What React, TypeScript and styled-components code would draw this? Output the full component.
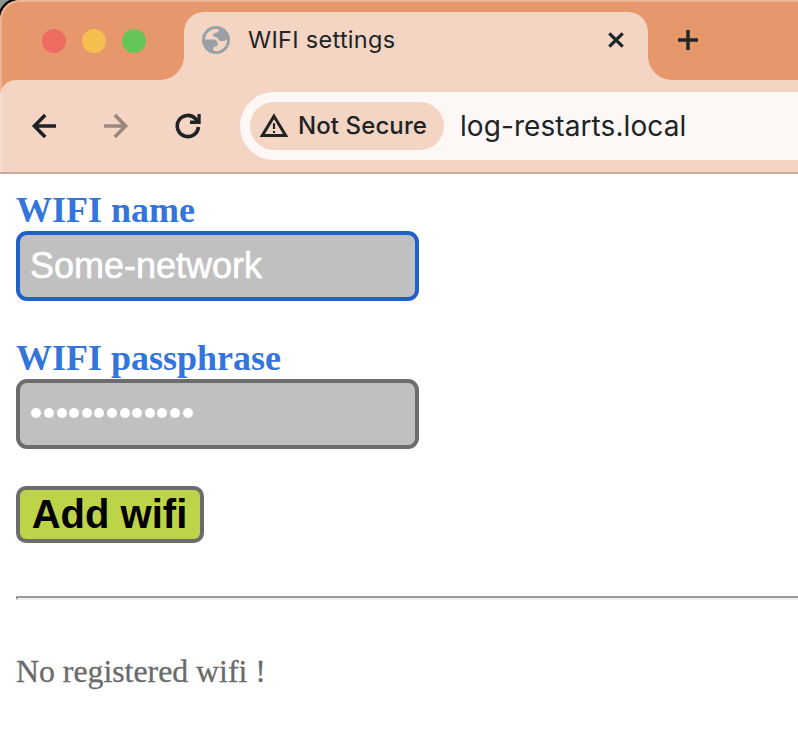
import React from 'react';
import styled, { createGlobalStyle } from 'styled-components';

const orange = '#e6986c';
const peach = '#f4d5c4';
const ink = '#202326';

const GlobalStyle = createGlobalStyle`
  * { box-sizing: border-box; }
  html, body { margin: 0; background: #fff; overflow: hidden; }
`;

const Screen = styled.div`
  width: 798px;
  height: 742px;
  overflow: hidden;
  background: radial-gradient(circle at 20px 20px, #000 22px, #8f958f 23px) 0 0 / 20px 20px no-repeat #fff;
`;

const Chrome = styled.header`
  position: relative;
  height: 174px;
  background: ${orange};
  border-bottom: 2px solid #c3aa9d;
  border-top-left-radius: 20px;
  overflow: hidden;
  font-family: Inter, "Liberation Sans", sans-serif;
  color: ${ink};

  &::after {
    content: '';
    position: absolute;
    inset: 0 -4px -4px 0;
    border: 2px solid rgba(255, 240, 230, 0.32);
    border-top-left-radius: 20px;
    pointer-events: none;
  }
`;

const TabStrip = styled.div`
  display: flex;
  height: 80px;
  background: linear-gradient(${orange} 40px, ${peach} 40px);
`;

const WindowControls = styled.div`
  display: flex;
  gap: 16px;
  width: 184px;
  padding: 29px 0 0 42px;
  background: ${orange};
  border-bottom-right-radius: 24px;
`;

const Light = styled.span<{ $color: string }>`
  width: 24px;
  height: 24px;
  border-radius: 50%;
  background: ${p => p.$color};
`;

const Tab = styled.div`
  display: flex;
  align-items: center;
  width: 464px;
  height: 68px;
  margin-top: 12px;
  padding: 0 22px 12px 18px;
  background: ${peach};
  border-radius: 20px 20px 0 0;
`;

const TabTitle = styled.span`
  flex: 1;
  margin-left: 18px;
  font-size: 23.5px;
  line-height: 28px;
  letter-spacing: 0.3px;
  white-space: nowrap;
`;

const StripRest = styled.div`
  flex: 1;
  padding: 28px 0 0 28px;
  background: ${orange};
  border-bottom-left-radius: 24px;
`;

const Toolbar = styled.div`
  display: flex;
  align-items: center;
  height: 92px;
  padding-left: 28px;
  background: ${peach};
  border-top-left-radius: 16px;
`;

const Icon = styled.svg`
  display: block;
  flex: none;
  fill: none;
  stroke: currentColor;
`;

const NavButtons = styled.div`
  display: flex;
  gap: 40px;
  width: 212px;
`;

const AddressBar = styled.div`
  display: flex;
  align-items: center;
  flex: 1;
  height: 68px;
  padding-left: 10px;
  background: #fdf8f6;
  border-radius: 34px 0 0 34px;
`;

const SecurityChip = styled.div`
  display: flex;
  align-items: center;
  gap: 9px;
  width: 194px;
  height: 48px;
  padding-left: 9px;
  border-radius: 24px;
  background: ${peach};
  font-size: 24px;
  font-weight: 500;
  letter-spacing: 0.1px;
  line-height: 28px;
  white-space: nowrap;
`;

const Address = styled.span`
  margin-left: 16px;
  font-size: 28px;
  letter-spacing: 0.08px;
  white-space: nowrap;
`;

const Page = styled.main`
  height: 568px;
  padding: 16px 0 0 16px;
  background: #fff;
  font-family: "Liberation Serif", "Times New Roman", serif;
`;

const Field = styled.div`
  height: 148px;
`;

const Label = styled.label`
  display: block;
  height: 41px;
  color: #3475dc;
  font-size: 36px;
  font-weight: 700;
  line-height: 41px;
`;

const Input = styled.input<{ $active?: boolean }>`
  display: block;
  width: 403px;
  height: 70px;
  padding: 0 10px;
  border: 4px solid ${p => (p.$active ? '#1f60ca' : '#6c6c6c')};
  border-radius: 11px;
  outline: none;
  background: #c0c0c0;
  color: #fff;
  font-family: "Liberation Sans", Arial, sans-serif;
  font-size: 36px;
  -webkit-text-stroke: 0.6px #fff;
`;

const PasswordBox = styled.div`
  display: flex;
  align-items: center;
  gap: 2.6px;
  width: 403px;
  height: 70px;
  padding: 0 11.4px 2px;
  border: 4px solid #6c6c6c;
  border-radius: 11px;
  background: #c0c0c0;
`;

const Dot = styled.span`
  width: 10px;
  height: 10px;
  border-radius: 50%;
  background: #fff;
`;

const AddButton = styled.button`
  display: block;
  width: 188px;
  height: 57px;
  padding: 0 1px 0 0;
  border: 4px solid #6c6c6c;
  border-radius: 10px;
  background: #bdd348;
  color: #000;
  font: 700 40px/49px "Liberation Sans", Arial, sans-serif;
  white-space: nowrap;
`;

const Divider = styled.hr`
  height: 4px;
  margin: 53px 0 0;
  border: 2px solid;
  border-color: #9a9a9a #eee #eee #9a9a9a;
  border-right: 0;
`;

const Message = styled.p`
  margin: 53px 0 0;
  color: #6b6b6b;
  font-size: 31.8px;
  line-height: 37px;
  text-rendering: optimizeLegibility;
  font-variant-ligatures: common-ligatures;
  -webkit-text-stroke: 0.3px #6b6b6b;
`;

export default function App() {
  return (
    <Screen>
      <GlobalStyle />
      <Chrome>
        <TabStrip>
          <WindowControls>
            <Light $color="#ed6b60" />
            <Light $color="#f5bf50" />
            <Light $color="#63c656" />
          </WindowControls>
          <Tab>
            <Icon width="28" height="28" viewBox="0 0 28 28">
              <circle cx="14" cy="14" r="14" fill="#9aa0a6" stroke="none" />
              <path
                d="M3 13.500C3.500 8 8 3.300 13 3H16.500C17 5.500 16 6.500 14 6.800Q11.200 7 11 9Q11 10.800 13 11Q15.700 11 16.200 13Q17 15.200 20 15.200Q23 15.200 25.200 13.500C25.300 20 20 25 14 25.200Q11 25 11 23Q11.200 20.700 13.500 20.500Q16 20.300 15.700 17.500Q15.500 13.700 11.500 13.500Z"
                fill={peach}
                stroke="none"
              />
            </Icon>
            <TabTitle>WIFI settings</TabTitle>
            <Icon width="20" height="20" viewBox="0 0 20 20" strokeWidth="3.200">
              <path d="M3.300 3.300L16.700 16.700M16.700 3.300L3.300 16.700" />
            </Icon>
          </Tab>
          <StripRest>
            <Icon width="24" height="24" viewBox="0 0 24 24" strokeWidth="3.400">
              <path d="M12 2V22M2 12H22" />
            </Icon>
          </StripRest>
        </TabStrip>
        <Toolbar>
          <NavButtons>
            <Icon width="32" height="32" viewBox="0 0 32 32" strokeWidth="3.600">
              <path d="M28 16H6.500M17.200 5L6.400 16L17.200 27" />
            </Icon>
            <Icon width="32" height="32" viewBox="0 0 32 32" strokeWidth="3.600" color="#9b877d">
              <path d="M4 16H25.500M14.800 5L25.600 16L14.800 27" />
            </Icon>
            <Icon width="32" height="32" viewBox="0 0 32 32" strokeWidth="3.600">
              <path d="M26.400 17A10.600 10.600 0 1 1 23.600 8.800L25.500 11" />
              <path d="M28.700 4V14H18V10.600H23.200L25.500 8.300V4Z" fill="currentColor" stroke="none" />
            </Icon>
          </NavButtons>
          <AddressBar>
            <SecurityChip>
              <Icon width="30" height="28" viewBox="0 0 30 28" strokeWidth="3">
                <path d="M15 4.200L26.700 23.600H3.300Z" />
                <path d="M15 11.200V17M15 19V21" strokeWidth="2.200" />
              </Icon>
              <span>Not Secure</span>
            </SecurityChip>
            <Address>log-restarts.local</Address>
          </AddressBar>
        </Toolbar>
      </Chrome>
      <Page>
        <Field>
          <Label htmlFor="name">WIFI name</Label>
          <Input id="name" $active defaultValue="Some-network" spellCheck={false} />
        </Field>
        <Field>
          <Label>WIFI passphrase</Label>
          <PasswordBox>
            {Array.from({ length: 13 }, (_, i) => <Dot key={i} />)}
          </PasswordBox>
        </Field>
        <AddButton type="button">Add wifi</AddButton>
        <Divider />
        <Message>No registered wifi !</Message>
      </Page>
    </Screen>
  );
}
